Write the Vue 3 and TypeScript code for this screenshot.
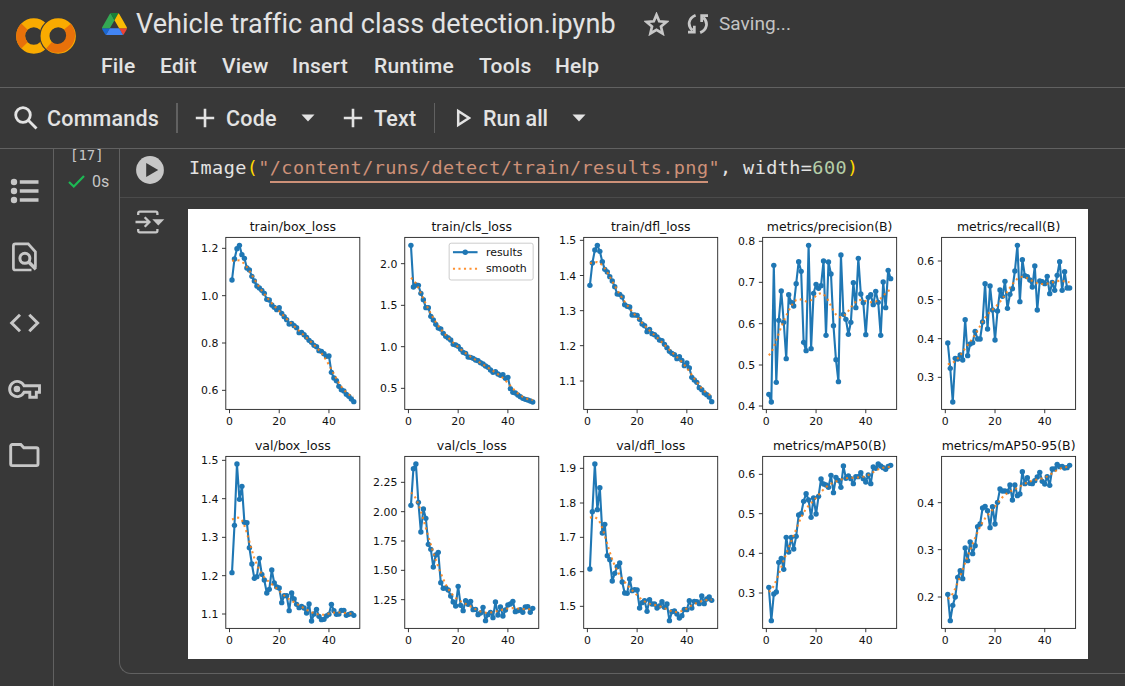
<script setup lang="ts">
interface Tick {
  label: string
  at: number
}

interface Plot {
  title: string
  row: number
  left: number
  ticks: Tick[]
  samples: number[]
  legend?: boolean
}

const menus: string[] = ['File', 'Edit', 'View', 'Insert', 'Runtime', 'Tools', 'Help']

// Sample and tick heights are measured from the top of a row, in thirds of a pixel.
const UNIT = 3
const PITCH = 178.95
const FIRST_LEFT = 37.8
const PLOT_W = 134
const PLOT_H = 172
const ROW_H = 225
const TOPS = [28.4, 22.4]

function ticks(labels: string, ats: number[]): Tick[] {
  return labels.split(' ').map((label, i) => ({ label, at: ats[i] / UNIT }))
}

function plot(title: string, row: number, col: number, t: Tick[], samples: number[], legend = false): Plot {
  return { title, row, left: FIRST_LEFT + PITCH * col, ticks: t, samples: samples.map((s) => s / UNIT), legend }
}

const plots: Plot[] = [
  plot('train/box_loss', 0, 0, ticks('1.2 1.0 0.8 0.6', [118, 260, 402, 544]), [
    213, 150, 119, 109, 137, 148, 177, 183, 202, 216, 231, 237, 244, 253, 271, 273, 288, 295, 302, 296, 313, 323, 332,
    345, 343, 350, 356, 371, 370, 377, 385, 394, 400, 409, 413, 425, 427, 434, 442, 441, 490, 507, 515, 532, 542, 546,
    556, 562, 570, 578,
  ]),
  plot('train/cls_loss', 0, 1, ticks('2.0 1.5 1.0 0.5', [164, 289, 413, 538]), [
    109, 234, 228, 229, 253, 272, 296, 296, 322, 333, 346, 357, 360, 373, 382, 387, 393, 406, 408, 412, 421, 430, 433,
    444, 445, 448, 453, 455, 461, 465, 471, 475, 483, 490, 488, 495, 499, 497, 508, 505, 539, 550, 552, 558, 563, 568,
    571, 573, 576, 579,
  ], true),
  plot('train/dfl_loss', 0, 2, ticks('1.5 1.4 1.3 1.2 1.1', [94, 199.5, 305, 410, 516]), [
    229, 162, 123, 109, 127, 158, 181, 189, 203, 216, 233, 255, 256, 264, 287, 292, 294, 318, 318, 319, 331, 345, 350,
    368, 361, 374, 377, 384, 393, 395, 406, 416, 427, 433, 437, 449, 443, 454, 470, 462, 477, 505, 513, 520, 536, 542,
    552, 557, 564, 578,
  ]),
  plot('metrics/precision(B)', 0, 3, ticks('0.8 0.7 0.6 0.5 0.4', [97, 220, 344, 468, 591]), [
    556, 579, 169, 520, 334, 246, 340, 449, 257, 280, 291, 224, 158, 187, 400, 425, 109, 419, 253, 226, 238, 230, 156,
    379, 159, 195, 350, 452, 518, 138, 316, 331, 376, 340, 221, 296, 148, 255, 281, 377, 265, 257, 287, 247, 280, 379,
    219, 296, 184, 209,
  ]),
  plot('metrics/recall(B)', 0, 4, ticks('0.6 0.5 0.4 0.3', [156, 272, 389, 505]), [
    402, 478, 579, 448, 450, 438, 453, 332, 440, 405, 401, 367, 390, 390, 339, 224, 360, 231, 303, 393, 306, 243, 262,
    217, 298, 256, 239, 186, 109, 278, 152, 200, 203, 213, 234, 171, 303, 216, 218, 224, 202, 254, 220, 244, 199, 158,
    244, 188, 237, 237,
  ]),
  plot('val/box_loss', 1, 0, ticks('1.5 1.4 1.3 1.2 1.1', [79, 194, 310, 425, 540]), [
    416, 274, 90, 196, 157, 265, 266, 341, 390, 433, 428, 373, 421, 438, 477, 466, 408, 447, 459, 462, 506, 485, 485,
    530, 477, 495, 511, 521, 517, 522, 537, 510, 561, 540, 526, 547, 557, 556, 546, 541, 511, 530, 541, 540, 529, 529,
    544, 541, 538, 544,
  ]),
  plot('val/cls_loss', 1, 1, ticks('2.25 2.00 1.75 1.50 1.25', [145, 233, 321, 409, 497]), [
    214, 104, 90, 205, 294, 225, 253, 331, 346, 399, 363, 355, 446, 463, 462, 468, 486, 504, 516, 457, 514, 530, 500,
    511, 502, 527, 526, 542, 537, 520, 560, 542, 535, 551, 504, 543, 519, 546, 528, 513, 510, 502, 533, 530, 527, 535,
    519, 518, 535, 523,
  ]),
  plot('val/dfl_loss', 1, 2, ticks('1.9 1.8 1.7 1.6 1.5', [103, 207, 310, 413, 517]), [
    405, 233, 90, 227, 161, 297, 271, 365, 377, 441, 418, 398, 387, 444, 477, 478, 435, 470, 467, 468, 522, 506, 500,
    532, 497, 510, 510, 522, 516, 503, 520, 510, 560, 533, 531, 540, 552, 545, 526, 527, 500, 522, 502, 503, 509, 486,
    509, 495, 489, 499,
  ]),
  plot('metrics/mAP50(B)', 1, 3, ticks('0.6 0.5 0.4 0.3', [121, 239, 358, 477]), [
    460, 560, 480, 474, 385, 373, 406, 310, 354, 310, 345, 307, 243, 239, 202, 179, 198, 250, 192, 240, 187, 135, 150,
    153, 160, 124, 176, 130, 139, 160, 96, 133, 126, 134, 149, 128, 128, 116, 134, 144, 123, 149, 99, 103, 90, 96, 101,
    106, 97, 94,
  ]),
  plot('metrics/mAP50-95(B)', 1, 4, ticks('0.4 0.3 0.2', [206, 347, 489]), [
    481, 560, 514, 489, 430, 410, 434, 342, 380, 324, 359, 335, 278, 270, 222, 217, 230, 281, 218, 270, 205, 165, 171,
    171, 173, 153, 198, 153, 185, 180, 113, 149, 131, 148, 149, 140, 129, 115, 142, 150, 128, 154, 105, 105, 91, 98, 97,
    102, 101, 94,
  ]),
]

const epochX = (epoch: number): number => 3.7 + 2.486 * epoch

function points(values: number[]): string {
  return values.map((v, i) => `${epochX(i + 1).toFixed(2)},${v.toFixed(2)}`).join(' ')
}

// Gaussian filter (sigma 3) with reflected edges.
function smooth(values: number[]): number[] {
  const n = values.length
  return values.map((_, i) => {
    let sum = 0
    let weight = 0
    for (let k = -12; k <= 12; k++) {
      let j = i + k
      if (j < 0) j = -j - 1
      if (j >= n) j = 2 * n - 1 - j
      const w = Math.exp((-k * k) / 18)
      sum += w * values[j]
      weight += w
    }
    return sum / weight
  })
}
</script>

<template>
  <div class="app">
    <header class="header">
      <svg class="logo" width="60" height="36" viewBox="0 0 60 36" fill="none" stroke-width="8.9">
        <circle cx="17.8" cy="18" r="13.2" stroke="#f9ab00" />
        <path d="M8.5 8.7a13.2 13.2 0 0 0 0 18.6" stroke="#e8710a" />
        <circle cx="42.2" cy="18" r="18.9" fill="#383838" stroke="none" />
        <circle cx="42.2" cy="18" r="13.2" stroke="#f9ab00" />
        <path d="M51.5 8.7a13.2 13.2 0 0 1-18.6 18.6" stroke="#e8710a" />
      </svg>
      <div class="heading">
        <div class="title-row">
          <svg class="drive" width="25" height="22.4" viewBox="0 0 87.3 78">
            <path d="M6.6 66.85l3.85 6.65c.8 1.4 1.95 2.5 3.3 3.3l13.75-23.8H0c0 1.55.4 3.1 1.2 4.5z" fill="#1967d2" />
            <path d="M43.65 25L29.9 1.2c-1.35.8-2.5 1.9-3.3 3.3L1.2 48.5A9 9 0 0 0 0 53h27.5z" fill="#34a853" />
            <path d="M73.55 76.8c1.35-.8 2.5-1.9 3.3-3.3l8.3-14.4c.8-1.4 2.15-4.55 2.15-6.1H59.8l5.85 11.5z" fill="#ea4335" />
            <path d="M43.65 25L57.4 1.2C56.05.4 54.5 0 52.9 0H34.4c-1.6 0-3.15.45-4.5 1.2z" fill="#188038" />
            <path d="M59.8 53H27.5L13.75 76.8c1.35.8 2.9 1.2 4.5 1.2h50.8c1.6 0 3.15-.45 4.5-1.2z" fill="#4285f4" />
            <path d="M73.4 26.5L60.7 4.5c-.8-1.4-1.95-2.5-3.3-3.3L43.65 25 59.8 53h27.45c0-1.55-.4-3.1-1.2-4.5z" fill="#fbbc04" />
          </svg>
          <span class="title">Vehicle traffic and class detection.ipynb</span>
          <svg class="star" width="25" height="24" viewBox="0 0 25 24">
            <path d="M12.5 2.800l2.700 6.500 7.200.6-5.400 4.700 1.600 6.900-6.100-3.700-6.100 3.700 1.600-6.900-5.400-4.700 7.200-.6z" fill="none" stroke="#c7c7c7" stroke-width="2.7" />
          </svg>
          <svg class="sync" width="22" height="22" viewBox="0 0 22 22">
            <g fill="none" stroke="#c7c7c7" stroke-width="2.8">
              <path d="M8.6 2.2C1.2 5.2.2 12.6 5.6 17.4M13.2 19.6c7-2.8 8.400-10.200 3-15.200" />
            </g>
            <path d="M1 17.800V20.600H8.700V12.800H6V17.800zM21 4V1.200H13.300V9H16V4z" fill="#c7c7c7" />
          </svg>
          <span class="saving">Saving...</span>
        </div>
        <nav class="menu">
          <span v-for="m in menus" :key="m">{{ m }}</span>
        </nav>
      </div>
    </header>

    <div class="toolbar">
      <svg class="search" width="24" height="24" viewBox="0 0 24 24" fill="none" stroke="#e3e3e3" stroke-width="2.8">
        <circle cx="9" cy="9" r="7.300" /><path d="M14.300 14.300L22.500 22.500" />
      </svg>
      <span class="commands">Commands</span>
      <i class="rule wide"></i>
      <svg class="plus" width="20" height="20" viewBox="0 0 20 20"><path d="M10 .8v18.400M.8 10h18.400" stroke="#e3e3e3" stroke-width="2.6" /></svg>
      <span class="code-label">Code</span>
      <svg class="caret" width="14" height="8" viewBox="0 0 14 8"><path d="M.5.5h13L7 7.500z" fill="#e3e3e3" /></svg>
      <svg class="plus second" width="20" height="20" viewBox="0 0 20 20"><path d="M10 .8v18.400M.8 10h18.400" stroke="#e3e3e3" stroke-width="2.6" /></svg>
      <span class="text-label">Text</span>
      <i class="rule"></i>
      <svg class="run" width="16" height="20" viewBox="0 0 16 20"><path d="M3.200 3v14l10.800-7z" fill="none" stroke="#e3e3e3" stroke-width="2.500" /></svg>
      <span class="run-label">Run all</span>
      <svg class="caret last" width="14" height="8" viewBox="0 0 14 8"><path d="M.5.5h13L7 7.500z" fill="#e3e3e3" /></svg>
    </div>

    <main class="body">
      <aside class="side">
        <svg width="34" height="34" viewBox="0 0 34 34" fill="#c7c7c7">
          <circle cx="7" cy="8" r="3.200" /><circle cx="7" cy="17" r="3.200" /><circle cx="7" cy="26" r="3.200" />
          <path d="M12.800 6.200H31.500v3.600H12.800zM12.800 15.200H31.500v3.600H12.800zM12.800 24.200H31.500v3.600H12.800z" />
        </svg>
        <svg width="34" height="34" viewBox="0 0 34 34" fill="none" stroke="#c7c7c7" stroke-width="3">
          <path d="M24.500 30H8.400a2 2 0 0 1-2-2V5.800a2 2 0 0 1 2-2h12.800l7.200 8V27" stroke-width="2.700" />
          <circle cx="17.900" cy="18.300" r="5" /><path d="M21.400 21.800l7.500 7.500" stroke-width="3.400" />
        </svg>
        <svg width="34" height="34" viewBox="0 0 34 34" fill="none" stroke="#c7c7c7" stroke-width="3">
          <path d="M13 8.800L4.700 17l8.300 8.200M22.300 8.800l8.300 8.200-8.300 8.200" />
        </svg>
        <svg width="34" height="34" viewBox="0 0 34 34" fill="none" stroke="#c7c7c7" stroke-width="2.900">
          <path d="M17.100 13.800A7.600 7.600 0 1 0 17.100 20.200H22.800v5h6.500v-5h3.200v-6.400z" />
          <circle cx="9.900" cy="17" r="3.300" fill="#c7c7c7" stroke="none" />
        </svg>
        <svg width="34" height="34" viewBox="0 0 34 34" fill="none" stroke="#c7c7c7" stroke-width="2.900">
          <path d="M5.300 6.500h8.500l3 3.200H29.400a1.600 1.600 0 0 1 1.600 1.600V26a1.600 1.600 0 0 1-1.600 1.600H5.300A1.600 1.600 0 0 1 3.700 26V8.100a1.600 1.600 0 0 1 1.600-1.600z" />
        </svg>
      </aside>

      <div class="gutter">
        <span class="count">[17]</span>
        <div class="status">
          <svg width="17" height="13" viewBox="0 0 17 13"><path d="M1 7l4.800 4.500L16 1" fill="none" stroke="#1db954" stroke-width="2.200" /></svg>
          <span>0s</span>
        </div>
      </div>

      <section class="cell">
        <div class="source">
          <svg class="play" width="28" height="28" viewBox="0 0 28 28">
            <circle cx="14" cy="14" r="13.900" fill="#c7c7c7" /><path d="M10.200 7v14l12-7z" fill="#383838" />
          </svg>
          <code class="code">Image<b class="paren">(</b><b class="str">"</b><b class="str link">/content/runs/detect/train/results.png</b><b class="str">"</b>, width=<b class="num">600</b><b class="paren">)</b></code>
        </div>
        <div class="output">
          <svg class="out-icon" width="30" height="24" viewBox="0 0 30 24" fill="none" stroke="#c7c7c7" stroke-width="2.300">
            <path d="M3.200 5V3.200a1.500 1.500 0 0 1 1.500-1.500h16.200a1.500 1.500 0 0 1 1.500 1.500V5M3.200 19v1.800a1.500 1.500 0 0 0 1.500 1.500h16.200a1.500 1.500 0 0 0 1.500-1.500V19" />
            <path d="M.5 12h13M9.700 7.200l4.700 4.800-4.700 4.800" />
            <path d="M17.300 9.200h12L23.300 15.600z" fill="#c7c7c7" stroke="none" />
          </svg>
          <svg class="figure" width="900" height="450" viewBox="0 0 900 450">
            <rect width="900" height="450" fill="#fff" />
            <g v-for="p in plots" :key="p.title" :transform="`translate(${p.left} ${p.row * ROW_H})`">
              <text class="plot-title" :x="PLOT_W / 2" :y="TOPS[p.row] - 6.600">{{ p.title }}</text>
              <g v-for="t in p.ticks" :key="t.label">
                <path class="axis" :d="`M-3.800 ${t.at}H0`" />
                <text class="tick-y" x="-7.400" :y="t.at + 4.100">{{ t.label }}</text>
              </g>
              <g v-for="e in [0, 20, 40]" :key="e">
                <path class="axis" :d="`M${epochX(e)} ${TOPS[p.row] + PLOT_H}v3.800`" />
                <text class="tick-x" :x="epochX(e)" :y="TOPS[p.row] + PLOT_H + 15.800">{{ e }}</text>
              </g>
              <polyline class="results" :points="points(p.samples)" />
              <circle v-for="(s, i) in p.samples" :key="i" class="dot" :cx="epochX(i + 1)" :cy="s" r="2.700" />
              <polyline class="smooth" :points="points(smooth(p.samples))" />
              <rect class="axis" x="0" :y="TOPS[p.row]" :width="PLOT_W" :height="PLOT_H" />
              <g v-if="p.legend" transform="translate(44.400 34.200)">
                <rect class="legend" width="84" height="36.800" rx="2" />
                <path class="results" d="M3.800 9h24.600" />
                <circle class="dot" cx="16.100" cy="9" r="2.700" />
                <path class="smooth" d="M3.800 25.600h24.600" />
                <text class="legend-text" x="36.800" y="12.800">results</text>
                <text class="legend-text" x="36.800" y="29.300">smooth</text>
              </g>
            </g>
          </svg>
        </div>
      </section>
    </main>
  </div>
</template>

<style>
body {
  background: #383838;
}
</style>

<style scoped>
.app {
  width: 1125px;
  height: 686px;
  display: flex;
  flex-direction: column;
  overflow: hidden;
  background: #383838;
  color: #e3e3e3;
  font-family: Roboto, 'Liberation Sans', sans-serif;
}
svg {
  display: block;
  flex: none;
}
span {
  white-space: nowrap;
}
.header {
  box-sizing: border-box;
  height: 88px;
  flex: none;
  display: flex;
  border-bottom: 1px solid #616161;
}
.logo {
  margin: 18px 0 0 16px;
}
.heading {
  margin-left: 25px;
}
.title-row {
  display: flex;
  align-items: center;
  height: 48px;
}
.drive {
  margin-left: 1px;
}
.title {
  width: 480px;
  margin-left: 9px;
  font-size: 27px;
  letter-spacing: 0.04px;
}
.star {
  margin-left: 28px;
}
.sync {
  margin-left: 18px;
}
.saving {
  margin-left: 10px;
  margin-top: -1px;
  font-size: 19px;
  letter-spacing: 0.05px;
  color: #c4c4c4;
}
.menu {
  display: grid;
  grid-template-columns: 59px 62px 70px 82px 105px 76px auto;
  line-height: 36px;
  font-size: 21px;
  font-weight: 500;
  letter-spacing: 0.22px;
}
.toolbar {
  box-sizing: border-box;
  height: 61px;
  flex: none;
  display: flex;
  align-items: center;
  border-bottom: 1px solid #616161;
  font-size: 21.5px;
  font-weight: 500;
  letter-spacing: 0.2px;
}
.search {
  margin-left: 14px;
}
.commands {
  width: 112px;
  margin-left: 9px;
}
.rule {
  width: 1px;
  height: 30px;
  margin-left: 18px;
  background: #616161;
}
.rule.wide {
  width: 2px;
  margin-left: 17px;
}
.plus {
  margin-left: 17px;
}
.code-label {
  width: 53px;
  margin-left: 11px;
}
.caret {
  margin-left: 22px;
}
.plus.second {
  margin-left: 28px;
}
.text-label {
  width: 42px;
  margin-left: 11px;
}
.run {
  margin-left: 20px;
}
.run-label {
  width: 67px;
  margin-left: 12px;
  letter-spacing: -0.05px;
}
.caret.last {
  margin-left: 22px;
}
.body {
  flex: 1;
  min-height: 0;
  display: flex;
}
.side {
  box-sizing: border-box;
  width: 54px;
  flex: none;
  display: flex;
  flex-direction: column;
  gap: 32px;
  padding: 25px 0 0 7px;
  border-right: 1px solid #616161;
}
.gutter {
  width: 65px;
  flex: none;
  color: #c7c7c7;
}
.count {
  display: block;
  height: 14px;
  margin: -1px 0 0 16px;
  font: 14px/15px 'DejaVu Sans Mono', monospace;
}
.status {
  display: flex;
  align-items: center;
  gap: 7px;
  margin: 10px 0 0 14px;
  font-size: 16px;
}
.cell {
  box-sizing: border-box;
  flex: 1;
  height: 525px;
  border: 1px solid #616161;
  border-width: 0 0 1px 1px;
  border-bottom-left-radius: 12px;
}
.source {
  box-sizing: border-box;
  height: 49px;
  display: flex;
  border-bottom: 1px solid #4b4b4b;
}
.play {
  margin: 7px 0 0 16px;
}
.code {
  margin: 6px 0 0 25px;
  font: 18.5px/25px 'DejaVu Sans Mono', monospace;
  letter-spacing: 0.405px;
  white-space: pre;
}
.code b {
  font-weight: 400;
}
.code .paren {
  color: #ffd700;
}
.str {
  color: #ce9178;
}
.link {
  border-bottom: 2px solid #ce9178;
  padding-bottom: 3px;
}
.num {
  color: #b5cea8;
}
.output {
  display: flex;
}
.out-icon {
  margin: 12px 0 0 15px;
}
.figure {
  margin: 11px 0 0 23px;
}
.figure text {
  font-family: 'DejaVu Sans', sans-serif;
  font-size: 10.9px;
  fill: #111;
}
.figure .plot-title {
  font-size: 12.5px;
  text-anchor: middle;
}
.tick-x {
  text-anchor: middle;
}
.tick-y {
  text-anchor: end;
}
.axis {
  fill: none;
  stroke: #222;
  stroke-width: 0.9;
}
.results {
  fill: none;
  stroke: #1f77b4;
  stroke-width: 2.1;
  stroke-linejoin: round;
}
.dot {
  fill: #1f77b4;
}
.smooth {
  fill: none;
  stroke: #ff7f0e;
  stroke-opacity: 0.85;
  stroke-width: 2.1;
  stroke-dasharray: 2.1 3.4;
}
.legend {
  fill: #fff;
  stroke: #ccc;
}
</style>
